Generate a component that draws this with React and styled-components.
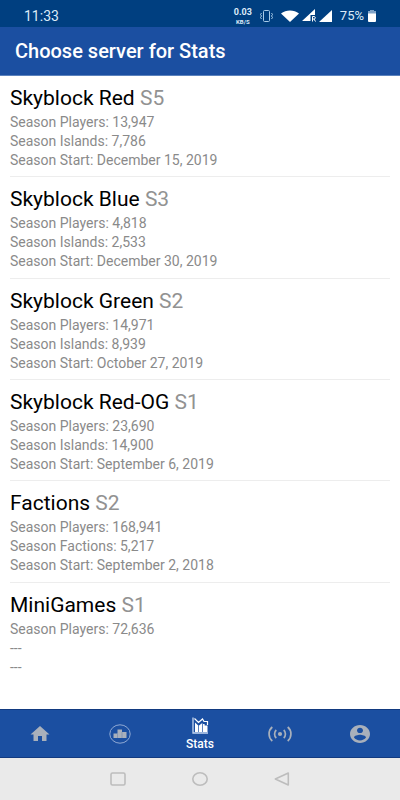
import React, { useState } from "react";
import styled, { createGlobalStyle } from "styled-components";

const servers = [
  {
    name: "Skyblock Red",
    season: "S5",
    lines: [
      "Season Players: 13,947",
      "Season Islands: 7,786",
      "Season Start: December 15, 2019",
    ],
  },
  {
    name: "Skyblock Blue",
    season: "S3",
    lines: [
      "Season Players: 4,818",
      "Season Islands: 2,533",
      "Season Start: December 30, 2019",
    ],
  },
  {
    name: "Skyblock Green",
    season: "S2",
    lines: [
      "Season Players: 14,971",
      "Season Islands: 8,939",
      "Season Start: October 27, 2019",
    ],
  },
  {
    name: "Skyblock Red-OG",
    season: "S1",
    lines: [
      "Season Players: 23,690",
      "Season Islands: 14,900",
      "Season Start: September 6, 2019",
    ],
  },
  {
    name: "Factions",
    season: "S2",
    lines: [
      "Season Players: 168,941",
      "Season Factions: 5,217",
      "Season Start: September 2, 2018",
    ],
  },
  {
    name: "MiniGames",
    season: "S1",
    lines: ["Season Players: 72,636", "---", "---"],
  },
];

const HomeIcon = () => (
  <svg width="20" height="18" viewBox="0 0 20 18" fill="currentColor">
    <path d="M10 1 L19.5 9.5 H16.5 V16 H12 V11 H8 V16 H3.5 V9.5 H0.5 Z" />
  </svg>
);

const RankIcon = () => (
  <svg width="22" height="20" viewBox="0 0 22 20" fill="currentColor">
    <ellipse cx="11" cy="10" rx="10.2" ry="9.2" fill="none" stroke="#8fa9d4" />
    <path d="M4.5 9.5H8.5V5.5H13V8H17.5V14H4.5z" />
    <path d="M8.5 9.5V14M13 8V14" stroke="#6f86b0" strokeWidth="0.6" />
  </svg>
);

const StatsIcon = () => (
  <svg width="17" height="17" viewBox="0 0 17 17">
    <path d="M1 0.5V16H16" fill="none" stroke="#c5d6f0" strokeWidth="1.3" />
    <path
      d="M3 5.5 L6.3 8.5 V15H3zM7 8.5 L10.3 6 V15H7zM11 7h1.6v1.6H15.5V15H11z"
      fill="#fff"
    />
    <path
      d="M2.5 1.5 L6.5 5.5 L10.5 2 L12 4.5 H15.5 V8"
      fill="none"
      stroke="#fff"
      strokeWidth="1.2"
    />
  </svg>
);

const LiveIcon = () => (
  <svg
    width="24"
    height="18"
    viewBox="0 0 24 18"
    fill="none"
    stroke="currentColor"
    strokeWidth="1.7"
  >
    <circle cx="12" cy="9" r="2.1" fill="currentColor" stroke="none" />
    <path d="M8.3 5C6 7 6 11 8.3 13M15.7 5C18 7 18 11 15.7 13" />
    <path d="M4.3 2C0 5.5 0 12.5 4.3 16M19.7 2C24 5.5 24 12.5 19.7 16" />
  </svg>
);

const AccountIcon = () => (
  <svg
    width="20"
    height="18"
    viewBox="2 2 20 20"
    preserveAspectRatio="none"
    fill="currentColor"
  >
    <path d="M12 2C6.48 2 2 6.48 2 12s4.48 10 10 10 10-4.48 10-10S17.52 2 12 2zm0 3c1.66 0 3 1.34 3 3s-1.34 3-3 3-3-1.34-3-3 1.34-3 3-3zm0 14.2c-2.5 0-4.71-1.28-6-3.22.03-1.99 4-3.08 6-3.08 1.99 0 5.97 1.09 6 3.08-1.29 1.94-3.5 3.22-6 3.22z" />
  </svg>
);

const VibrateIcon = () => (
  <svg width="13" height="12" viewBox="0 0 13 12" fill="none" stroke="#a9cbe8">
    <rect x="3.5" y="0.5" width="6" height="11" rx="1" />
    <path d="M1.5 3 L0.5 4.5 L1.5 6 L0.5 7.5 L1.5 9M11.5 3 L12.5 4.5 L11.5 6 L12.5 7.5 L11.5 9" />
  </svg>
);

const WifiIcon = () => (
  <svg width="18" height="12" viewBox="0 0 18 12" fill="#fff">
    <path d="M0 3.5C5 -0.6 13 -0.6 18 3.5L9 12z" />
  </svg>
);

const RoamingIcon = () => (
  <svg width="14" height="13" viewBox="0 0 14 13">
    <path d="M13 0V6H8.5V12H0z" fill="#fff" />
    <path
      d="M10.5 12.5V7.5H12.2C13.7 7.5 13.7 10 12.2 10H10.5M12 10L13.5 12.5"
      fill="none"
      stroke="#fff"
    />
  </svg>
);

const SignalIcon = () => (
  <svg width="13" height="12" viewBox="0 0 13 12" fill="#fff">
    <path d="M13 0V12H0z" />
  </svg>
);

const BatteryIcon = () => (
  <svg width="8" height="12" viewBox="0 0 8 12">
    <path d="M2 0H6V1H8V4H0V1H2z" fill="#7fa3c8" />
    <path d="M0 3.5H8V11Q8 12 7 12H1Q0 12 0 11z" fill="#fff" />
  </svg>
);

const tabs = [
  { id: "home", label: "Home", Icon: HomeIcon },
  { id: "top", label: "Top", Icon: RankIcon },
  { id: "stats", label: "Stats", Icon: StatsIcon },
  { id: "live", label: "Live", Icon: LiveIcon },
  { id: "account", label: "Account", Icon: AccountIcon },
];

const App = () => {
  const [activeTab, setActiveTab] = useState("stats");

  return (
    <>
      <GlobalStyle />
      <Screen>
        <StatusBar>
          <Clock>11:33</Clock>
          <StatusIcons>
            <Speed>
              <SpeedValue>0.03</SpeedValue>
              <SpeedUnit>KB/S</SpeedUnit>
            </Speed>
            <VibrateIcon />
            <Signals>
              <WifiIcon />
              <RoamingIcon />
              <SignalIcon />
            </Signals>
            <Battery>
              75%
              <BatteryIcon />
            </Battery>
          </StatusIcons>
        </StatusBar>
        <Header>
          <Title>Choose server for Stats</Title>
        </Header>
        <ServerList>
          {servers.map((server) => (
            <ServerRow key={server.name}>
              <ServerName>
                {server.name} <Season>{server.season}</Season>
              </ServerName>
              {server.lines.map((line, index) => (
                <Detail key={index}>{line}</Detail>
              ))}
            </ServerRow>
          ))}
        </ServerList>
        <TabBar>
          {tabs.map(({ id, label, Icon }) => (
            <Tab
              key={id}
              type="button"
              aria-label={label}
              $active={id === activeTab}
              onClick={() => setActiveTab(id)}
            >
              <Icon />
              {id === activeTab && <TabLabel>{label}</TabLabel>}
            </Tab>
          ))}
        </TabBar>
        <SystemBar>
          <SystemButton type="button" aria-label="Recent apps">
            <svg width="16" height="14" viewBox="0 0 16 14">
              <rect x="1" y="1" width="14" height="12" rx="1.5" />
            </svg>
          </SystemButton>
          <SystemButton type="button" aria-label="Home screen">
            <svg width="16" height="14" viewBox="0 0 16 14">
              <ellipse cx="8" cy="7" rx="7.2" ry="6.2" />
            </svg>
          </SystemButton>
          <SystemButton type="button" aria-label="Back">
            <svg width="16" height="14" viewBox="0 0 16 14">
              <path d="M14.3 1V13L1.3 7z" strokeLinejoin="round" />
            </svg>
          </SystemButton>
        </SystemBar>
      </Screen>
    </>
  );
};

export default App;

const GlobalStyle = createGlobalStyle`
  * {
    box-sizing: border-box;
  }

  body {
    margin: 0;
    background: #fff;
    font-family: Roboto, sans-serif;
  }
`;

const Screen = styled.div`
  min-height: 100vh;
  display: flex;
  flex-direction: column;
`;

const StatusBar = styled.div`
  height: 27px;
  padding: 4px 24px 0;
  display: flex;
  align-items: center;
  justify-content: space-between;
  background: #003f80;
  color: #dcebf8;
`;

const Clock = styled.span`
  font-size: 14px;
`;

const StatusIcons = styled.div`
  display: flex;
  align-items: center;
  gap: 8px;
`;

const Speed = styled.div`
  display: flex;
  flex-direction: column;
  align-items: center;
  font-weight: bold;
`;

const SpeedValue = styled.span`
  font-size: 9px;
  line-height: 11px;
`;

const SpeedUnit = styled.span`
  font-size: 6px;
  line-height: 7px;
`;

const Signals = styled.div`
  display: flex;
  align-items: center;
  gap: 3px;
`;

const Battery = styled.div`
  display: flex;
  align-items: center;
  gap: 4px;
  font-size: 13px;
`;

const Header = styled.header`
  height: 49px;
  padding: 0 15px;
  display: flex;
  align-items: center;
  background: #1b4fa1;
  border-bottom: 1px solid #5b82bd;
`;

const Title = styled.h1`
  margin: 0;
  color: #fff;
  font-size: 20px;
  font-weight: 500;
`;

const ServerList = styled.ul`
  flex: 1;
  margin: 0;
  padding: 0 10px 25px;
  display: grid;
  grid-auto-rows: 1fr;
  list-style: none;
`;

const ServerRow = styled.li`
  padding: 10px 0 6px;
  border-bottom: 1px solid #ededed;

  &:last-child {
    border-bottom-color: transparent;
  }
`;

const ServerName = styled.h2`
  margin: 0 0 3px;
  color: #000;
  font-size: 21px;
  font-weight: 400;
  line-height: 24px;
`;

const Season = styled.span`
  color: #929292;
`;

const Detail = styled.div`
  color: #8a8a8a;
  font-size: 14px;
  line-height: 19px;
`;

const TabBar = styled.nav`
  height: 49px;
  display: flex;
  background: #1b4fa1;
  border-top: 1px solid #123a80;
  border-bottom: 1px solid #123a80;
`;

const Tab = styled.button`
  flex: 1;
  padding: 0;
  display: flex;
  flex-direction: column;
  align-items: center;
  justify-content: center;
  gap: 3px;
  border: 0;
  background: none;
  color: ${(props) => (props.$active ? "#fff" : "#a9b0bb")};
  font-family: inherit;
`;

const TabLabel = styled.span`
  font-size: 12px;
  font-weight: 500;
  line-height: 14px;
`;

const SystemBar = styled.div`
  height: 42px;
  display: flex;
  align-items: center;
  justify-content: center;
  background: #eaeaea;
`;

const SystemButton = styled.button`
  width: 82px;
  padding: 0;
  display: flex;
  justify-content: center;
  border: 0;
  background: none;

  svg {
    fill: none;
    stroke: #bdbdbd;
    stroke-width: 1.6;
  }
`;
